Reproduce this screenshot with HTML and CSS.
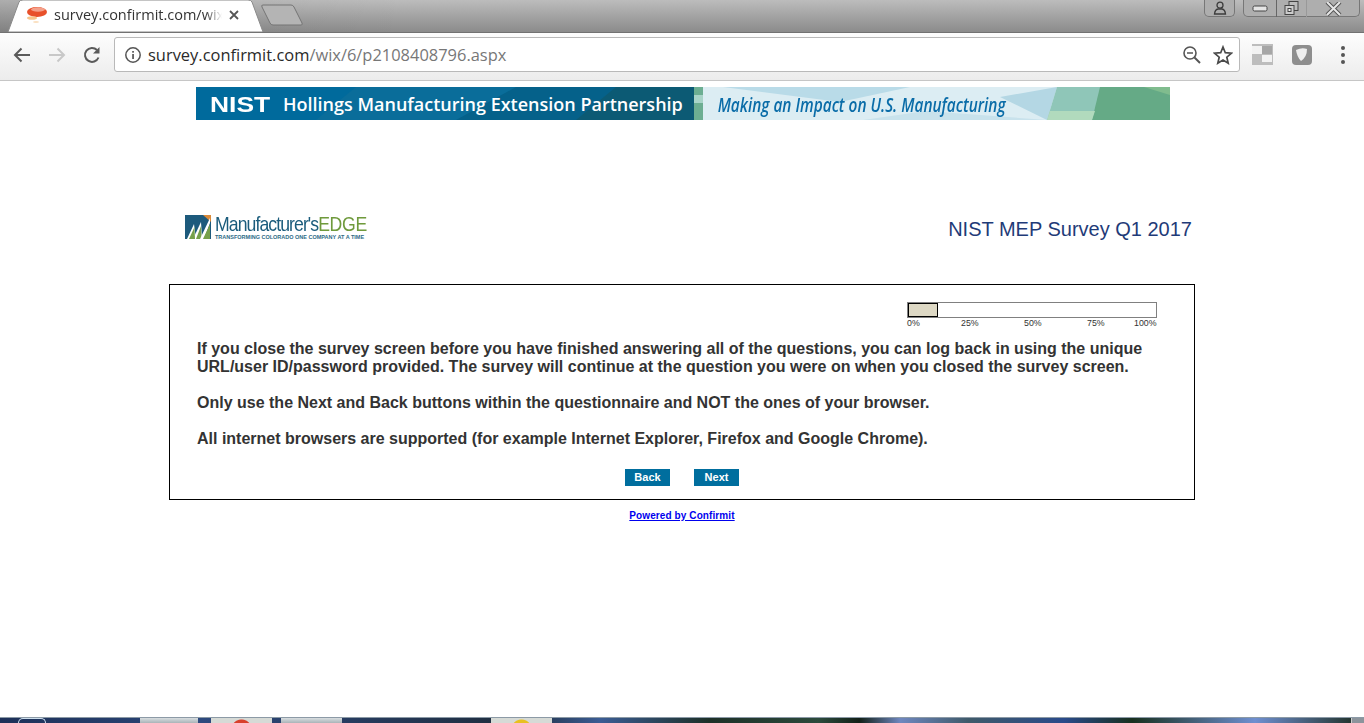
FILE: index.html
```html
<!DOCTYPE html>
<html lang="en">
<head>
<meta charset="utf-8">
<title>survey.confirmit.com</title>
<link rel="stylesheet" href="styles.css">
</head>
<body>
<div class="browser">
  <header class="tabstrip">
    <div class="tab">
      <svg class="tab-shape" width="258" height="32" viewBox="0 0 258 32"><path d="M1 32 L12 2 Q13 0 16 0 H241 Q244 0 245 2 L256 32 Z" fill="#fff" stroke="#8a8a8a"/></svg>
      <svg class="favicon" width="22" height="20" viewBox="0 0 22 20"><ellipse cx="11" cy="7" rx="10" ry="5" fill="#e8502a"/><ellipse cx="12" cy="4.500" rx="7" ry="2.200" fill="#f4a08a"/><ellipse cx="6" cy="13" rx="5" ry="1.800" fill="#f7c48a"/><ellipse cx="10" cy="17" rx="3" ry="1" fill="#fbe0c0"/></svg>
      <span class="tab-title">survey.confirmit.com/wix</span>
      <svg class="tab-close" width="10" height="10" viewBox="0 0 10 10"><path d="M1 1 L9 9 M9 1 L1 9" stroke="#555" stroke-width="1.800"/></svg>
    </div>
    <svg class="newtab" width="44" height="22" viewBox="0 0 44 22"><path d="M2 1 H30 Q32 1 33 3 L41 19 Q42 21 40 21 H12 Q10 21 9 19 L1 3 Q0 1 2 1 Z" fill="#b4b4b4" stroke="#757575"/></svg>
    <div class="winctl">
      <div class="win-btn win-user">
        <svg width="14" height="14" viewBox="0 0 14 14"><circle cx="7" cy="4.200" r="3" fill="none" stroke="#3c3c3c" stroke-width="1.300"/><path d="M1.500 13 Q2 8.500 5 8 H9 Q12 8.500 12.500 13 Z" fill="none" stroke="#3c3c3c" stroke-width="1.300"/></svg>
      </div>
      <div class="win-group">
        <div class="win-btn win-min"><svg width="16" height="8" viewBox="0 0 16 8"><rect x="1" y="1" width="14" height="5" rx="1.500" fill="#e4e4e4" stroke="#444"/></svg></div>
        <div class="win-btn win-max"><svg width="16" height="15" viewBox="0 0 16 15"><rect x="5" y="0.500" width="9" height="9" fill="#bbb" stroke="#444"/><rect x="1" y="4.500" width="9" height="9" fill="#ccc" stroke="#444"/><rect x="4" y="7.500" width="3" height="3" fill="#eee" stroke="#444"/></svg></div>
        <div class="win-btn win-close"><svg width="17" height="14" viewBox="0 0 17 14"><path d="M2 0 L15 13 M15 0 L2 13" stroke="#555" stroke-width="4"/><path d="M2 0 L15 13 M15 0 L2 13" stroke="#e6e6e6" stroke-width="2"/></svg></div>
      </div>
    </div>
  </header>
  <nav class="toolbar">
    <svg class="tb-icon back" width="20" height="18" viewBox="0 0 20 18"><path d="M18 9 H3 M9.500 2.500 L3 9 L9.500 15.500" fill="none" stroke="#5a5a5a" stroke-width="2"/></svg>
    <svg class="tb-icon fwd" width="20" height="18" viewBox="0 0 20 18"><path d="M2 9 H17 M10.500 2.500 L17 9 L10.500 15.500" fill="none" stroke="#c8c8c8" stroke-width="2"/></svg>
    <svg class="tb-icon reload" width="20" height="20" viewBox="0 0 20 20"><path d="M16.500 12.500 A7 7 0 1 1 15 5" fill="none" stroke="#5a5a5a" stroke-width="2"/><path d="M17.500 2 V8.500 H11 Z" fill="#5a5a5a"/></svg>
    <div class="omnibox">
      <svg class="info" width="18" height="18" viewBox="0 0 18 18"><circle cx="9" cy="9" r="7.200" fill="none" stroke="#555" stroke-width="1.500"/><rect x="8.200" y="8" width="1.700" height="5" fill="#555"/><rect x="8.200" y="5" width="1.700" height="1.700" fill="#555"/></svg>
      <span class="url"><span class="url-host">survey.confirmit.com</span>/wix/6/p2108408796.aspx</span>
      <svg class="zoom-out" width="20" height="20" viewBox="0 0 20 20"><circle cx="8" cy="8" r="6" fill="none" stroke="#555" stroke-width="1.600"/><path d="M5 8 H11" stroke="#555" stroke-width="1.500"/><path d="M12.500 12.500 L18 18" stroke="#555" stroke-width="2"/></svg>
      <svg class="star" width="20" height="20" viewBox="0 0 20 20"><path d="M10 2 L12.300 7.700 L18.500 8.200 L13.800 12.200 L15.200 18.200 L10 15 L4.800 18.200 L6.200 12.200 L1.500 8.200 L7.700 7.700 Z" fill="none" stroke="#4a4a4a" stroke-width="1.700"/></svg>
    </div>
    <svg class="ext ext-one" width="21" height="21" viewBox="0 0 21 21"><rect width="21" height="21" fill="#bdbdbd"/><rect x="0" y="2" width="10" height="8" fill="#f2f2f2"/><rect x="10" y="11" width="10" height="7" fill="#f2f2f2"/><rect x="10" y="2" width="10" height="8" fill="#a6a6a6"/></svg>
    <svg class="ext ext-two" width="20" height="20" viewBox="0 0 20 20"><rect width="20" height="20" rx="4" fill="#8e8e8e"/><path d="M4 5 Q10 2 15 4 Q15 12 9 16 Q5 12 4 5 Z" fill="#eee"/></svg>
    <div class="menu-dots"><i></i><i></i><i></i></div>
  </nav>

  <main class="page">
    <div class="banner">
      <svg class="banner-art" width="974" height="33" viewBox="0 0 974 33" preserveAspectRatio="none">
        <rect width="498" height="33" fill="#006a9c"/>
        <path d="M160 0 H330 L270 33 H120 Z" fill="#0a6d9a"/>
        <path d="M320 0 H498 V33 H260 Z" fill="#05618a"/>
        <path d="M420 0 H498 V33 H380 Z" fill="#0c5a74"/>
        <rect x="498" width="9" height="33" fill="#6cae92"/>
        <rect x="498" y="8" width="9" height="8" fill="#a8d4c8"/>
        <rect x="507" width="467" height="33" fill="#dcedf3"/>
        <path d="M527 0 H714 L644 15 Z" fill="#b9dbe8"/>
        <path d="M667 33 L730 24 L851 33 Z" fill="#c8e2ec"/>
        <path d="M804 10 L861 0 L851 33 Z" fill="#b4d7e4"/>
        <path d="M861 0 H974 V33 H851 Z" fill="#8fc6b8"/>
        <path d="M904 0 H974 V33 H896 Z" fill="#65aa86"/>
        <path d="M948 0 H974 V8 Z" fill="#80bc8e"/>
        <path d="M851 33 L854 24 H899 L896 33 Z" fill="#b1dabd"/>
      </svg>
      <div class="banner-left">
        <span class="nist">NIST</span>
        <span class="hollings">Hollings Manufacturing Extension Partnership</span>
      </div>
      <div class="banner-right">Making an Impact on U.S. Manufacturing</div>
    </div>

    <div class="head-row">
      <div class="logo">
        <svg class="logo-mark" width="26" height="26" viewBox="0 0 26 26"><rect y="1" width="26" height="24" fill="#1d5a7c"/><path d="M18 1 H26 V8 Z" fill="#d98a3a"/><path d="M2 25 L9 10 L11 25 Z" fill="#fff"/><path d="M8 25 L16 8 L17 25 Z" fill="#fff"/><path d="M4 25 L9.500 13 L10 25 Z" fill="#76a04a"/><path d="M11 25 L16 12 L16.500 25 Z" fill="#76a04a"/><path d="M15 25 L25 4 V9 L19 25 Z" fill="#fff"/><path d="M18 25 L25 10 V25 Z" fill="#76a04a"/></svg>
        <div class="logo-text">
          <div class="logo-name"><span class="logo-mf">Manufacturer's</span><span class="logo-edge">EDGE</span></div>
          <div class="logo-tag">TRANSFORMING COLORADO ONE COMPANY AT A TIME</div>
        </div>
      </div>
      <div class="survey-title">NIST MEP Survey Q1 2017</div>
    </div>

    <section class="card">
      <div class="progress">
        <div class="progress-track"><div class="progress-fill"></div></div>
        <div class="progress-scale"><span>0%</span><span>25%</span><span>50%</span><span>75%</span><span>100%</span></div>
      </div>
      <div class="intro">
        <p>If you close the survey screen before you have finished answering all of the questions, you can log back in using the unique URL/user ID/password provided. The survey will continue at the question you were on when you closed the survey screen.</p>
        <p>Only use the Next and Back buttons within the questionnaire and NOT the ones of your browser.</p>
        <p>All internet browsers are supported (for example Internet Explorer, Firefox and Google Chrome).</p>
      </div>
      <div class="nav-buttons">
        <button class="nav-btn" type="button">Back</button>
        <button class="nav-btn" type="button">Next</button>
      </div>
    </section>
    <a class="powered" href="#">Powered by Confirmit</a>
  </main>

  <footer class="taskbar">
    <span class="tb-orb"></span>
    <span class="tb-app tb-a"></span>
    <span class="tb-app tb-b"></span>
    <span class="tb-app tb-c"></span>
    <span class="tb-app tb-d"></span>
    <span class="tb-show"></span>
  </footer>
</div>
</body>
</html>
```

FILE: styles.css
```css
* { box-sizing: border-box; }
html, body { margin: 0; padding: 0; background: #fff; }
body { font-family: "Liberation Sans", Arial, sans-serif; overflow: hidden; }
.browser { display: flex; flex-direction: column; width: 1364px; height: 723px; overflow: hidden; }

/* Tab strip */
.tabstrip { position: relative; flex: 0 0 32px; display: flex; align-items: flex-start; padding-left: 7px;
  background: linear-gradient(90deg, rgba(0,0,0,.08), rgba(0,0,0,0) 30%), linear-gradient(#bcbcbc, #8b8b8b);
  border-bottom: 1px solid #727272; }
.tab { position: relative; width: 258px; height: 32px; display: flex; align-items: center; padding: 0 0 2px 19px; }
.tab-shape { position: absolute; left: 0; top: 0; }
.favicon, .tab-title, .tab-close { position: relative; }
.favicon { flex: none; margin-right: 6px; }
.tab-title { width: 168px; flex: none; white-space: nowrap; font: 14.500px/20px "Open Sans", sans-serif; color: #333;
  -webkit-mask-image: linear-gradient(90deg, #000 90%, transparent); mask-image: linear-gradient(90deg, #000 90%, transparent); }
.tab-close { flex: none; margin-left: 7px; }
.newtab { margin: 4px 0 0 -4px; flex: none; }
.winctl { margin-left: auto; display: flex; gap: 8px; padding-right: 4px; align-items: flex-start; }
.win-btn { display: flex; align-items: center; justify-content: center; height: 17px; overflow: hidden; }
.win-user { width: 31px; border: 1px solid #777; border-top: 0; border-radius: 0 0 5px 5px; background: #aeaeae; }
.win-group { display: flex; height: 17px; border: 1px solid #777; border-top: 0; border-radius: 0 0 5px 5px; background: #aeaeae; }
.win-min { width: 32px; }
.win-max { width: 31px; border-left: 1px solid #666; border-right: 1px solid #999; }
.win-close { width: 52px; }

/* Toolbar */
.toolbar { flex: 0 0 48px; display: flex; align-items: center; padding: 0 0 4px 12px;
  background: linear-gradient(#fdfdfd, #ececec); border-bottom: 1px solid #c6c6c6; }
.tb-icon { flex: none; }
.fwd { margin-left: 15px; }
.reload { margin-left: 15px; }
.omnibox { flex: none; margin-left: 12px; width: 1126px; height: 35px; display: flex; align-items: center; padding: 0 6px 0 9px;
  background: #fff; border: 1px solid #b9b9b9; border-radius: 3px; }
.info { flex: none; }
.url { margin-left: 6px; font: 16.450px/22px "Open Sans", sans-serif; color: #777; white-space: nowrap; }
.url-host { color: #2a2a2a; }
.zoom-out { flex: none; margin-left: auto; }
.star { flex: none; margin-left: 11px; }
.ext { flex: none; }
.ext-one { margin-left: 12px; }
.ext-two { margin-left: 19px; }
.menu-dots { margin-left: 29px; display: flex; flex-direction: column; gap: 3px; }
.menu-dots i { display: block; width: 4px; height: 4px; border-radius: 50%; background: #555; }

/* Page */
.page { flex: 1; min-height: 0; display: flex; flex-direction: column; align-items: center; padding-top: 6px; }
.banner { position: relative; flex: none; width: 974px; height: 33px; margin-left: 2px; display: flex; align-items: center; }
.banner-art { position: absolute; left: 0; top: 0; }
.banner-left, .banner-right { position: relative; }
.banner-left { width: 507px; flex: none; display: flex; align-items: center; padding: 1px 0 0 14px; color: #fff; }
.nist { font: bold 22px/33px "Liberation Sans", sans-serif; width: 73px; flex: none; transform: scaleX(1.200); transform-origin: left center; }
.hollings { font: 600 18px/33px "Open Sans", sans-serif; white-space: nowrap; }
.banner-right { padding: 1px 0 0 19px; font: italic 600 20px/33px "Open Sans", sans-serif; color: #0a6ca8; white-space: nowrap; transform: scaleX(.770); transform-origin: left center; }
.head-row { flex: none; width: 1026px; height: 164px; display: flex; justify-content: space-between; align-items: flex-start; padding: 94px 3px 0 16px; }
.logo { display: flex; gap: 4px; align-items: flex-start; }
.logo-mark { flex: none; }
.logo-name { font: 21px/20px "Liberation Sans", sans-serif; white-space: nowrap; letter-spacing: -1.100px; transform: scaleX(.840); transform-origin: left center; }
.logo-mf { color: #1b5c7c; }
.logo-edge { color: #6f9a3c; letter-spacing: -.4px; }
.logo-tag { font: bold 5.500px/6px "Liberation Sans", sans-serif; color: #2c6a86; white-space: nowrap; }
.survey-title { margin-top: 3px; font: 20px/24px "Liberation Sans", sans-serif; color: #1f3b78; }

.card { flex: none; width: 1026px; height: 216px; border: 1px solid #000; padding: 17px 27px 0; display: flex; flex-direction: column; }
.progress { width: 250px; align-self: flex-end; margin-right: 10px; }
.progress-track { height: 16px; border: 1px solid #808080; background: #fff; }
.progress-fill { width: 30px; height: 14px; margin: 0; background: #ddd8c4; border: 1px solid #000; }
.progress-scale { display: grid; grid-template-columns: 54px 63px 63px 47px 23px; font-size: 8.800px; line-height: 10px; color: #333; }
.intro { margin-top: 12px; font-size: 16px; line-height: 18px; font-weight: bold; color: #333; }
.intro p { margin: 0 0 18px; }
.nav-buttons { display: flex; justify-content: center; gap: 24px; margin-top: 3px; }
.nav-btn { width: 45px; height: 17px; padding: 0; border: 0; background: #006e9e; color: #fff; font: bold 11px/17px "Liberation Sans", sans-serif; }
.powered { margin-top: 10px; font-size: 10px; line-height: 11px; font-weight: bold; color: #0000ee; letter-spacing: .1px; }

/* Taskbar */
.taskbar { flex: 0 0 6px; position: relative; display: flex; border-top: 1px solid #8c9aa6;
  background: linear-gradient(90deg, #1d3058 0, #27406f 10%, #2e4a80 14%, #1e2c3c 38%, #3b5c94 44%, #1d3028 52%, #2c4a3c 60%, #122018 63%, #6f87bf 66%, #3f5a6a 71%, #2a4a8a 78%, #18301f 83%, #6f8fd0 92%, #1a2a1c 100%); }
.tb-app { position: absolute; top: 0; height: 5px; background: linear-gradient(#d8dde0, #aab4b8); }
.tb-a { left: 140px; width: 58px; }
.tb-b { left: 211px; width: 61px; background: radial-gradient(circle at 50% 12px, #d8402c 0 10px, transparent 11px), #d6dad6; }
.tb-c { left: 281px; width: 61px; }
.tb-d { left: 491px; width: 61px; background: radial-gradient(circle at 50% 12px, #e8c020 0 10px, transparent 11px), #d6dad6; }
.tb-orb { position: absolute; left: 18px; top: 0; width: 28px; height: 5px; border-radius: 14px 14px 0 0; border: 1px solid #cfe0ee; border-bottom: 0; }
.tb-show { position: absolute; right: 0; top: 0; width: 13px; height: 5px; border-left: 1px solid #ccc; background: #8c949c; }
```
